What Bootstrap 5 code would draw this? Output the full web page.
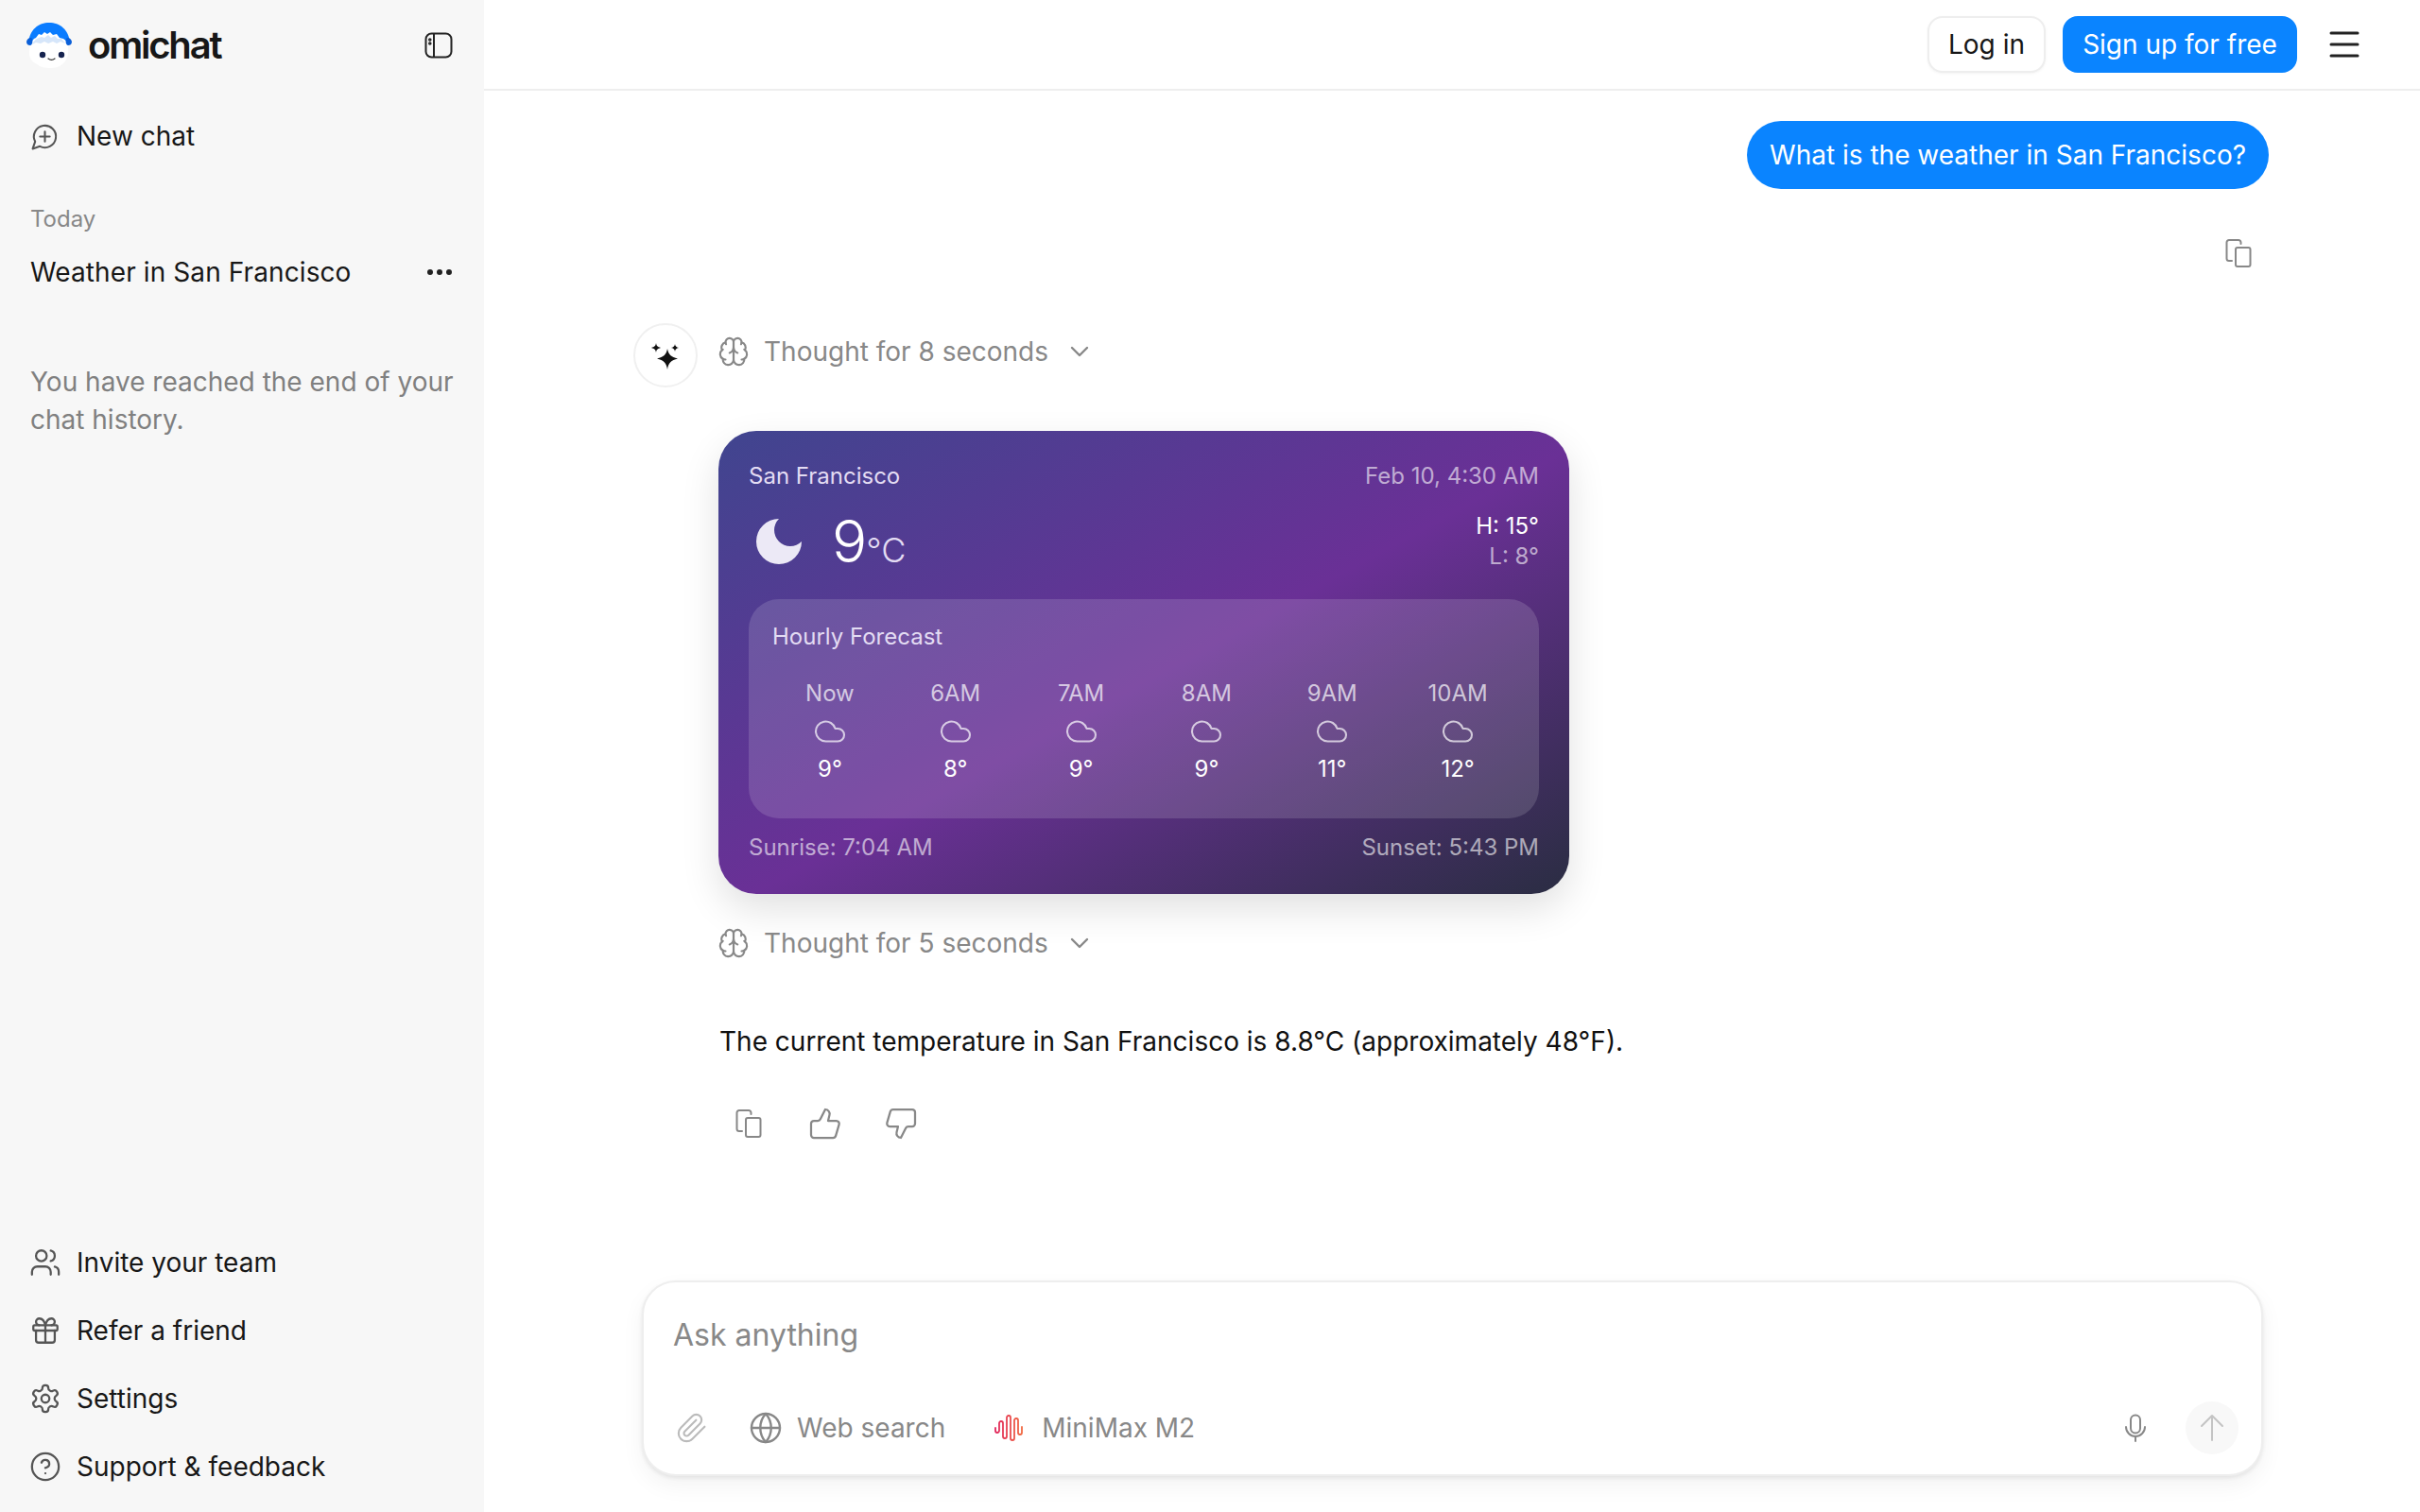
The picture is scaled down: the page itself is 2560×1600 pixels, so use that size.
<!DOCTYPE html>
<html lang="en">
<head>
  <meta charset="UTF-8" />
  <title>omichat</title>
  <link href="https://cdn.jsdelivr.net/npm/bootstrap@5.3.2/dist/css/bootstrap.min.css" rel="stylesheet" />
  <style>
    body {
      font-family: Inter, "Liberation Sans", sans-serif;
      font-size: 28px;
      color: #171717;
      background-color: #fff;
      overflow: hidden;
    }
    .app-shell { width: 2560px; height: 1600px; }
    svg { display: block; flex-shrink: 0; fill: none; stroke: currentColor; stroke-width: 2; stroke-linecap: round; stroke-linejoin: round; }

    /* sidebar */
    .side-panel { width: 512px; height: 1600px; background-color: #f7f7f7; padding: 0 33px 0 32px; }
    .brand-row { height: 96px; margin-left: -4px; }
    .brand-name { font-size: 40px; font-weight: 600; letter-spacing: -2.2px; color: #171717; margin-left: 17px; }
    .new-chat { height: 48px; margin-top: 24px; gap: 18px; }
    .new-chat svg { color: #555; stroke-width: 1.6; }
    .day-label { font-size: 24px; color: #888; margin-top: 48px; line-height: 32px; }
    .history-row { height: 40px; margin-top: 20px; letter-spacing: .1px; }
    .end-note { color: #808080; line-height: 40px; margin-top: 76px; margin-right: -6px; }
    .foot-list { padding-bottom: 12px; }
    .foot-link { height: 72px; gap: 16px; margin-left: -1px; }
    .foot-link svg { color: #555; stroke-width: 1.6; }

    /* header */
    .top-bar { height: 96px; border-bottom: 2px solid #eee; padding-right: 64px; }
    .login-btn, .signup-btn { font-size: 28px; height: 60px; border-radius: 16px; padding: 0; display: flex; align-items: center; justify-content: center; white-space: nowrap; }
    .login-btn { width: 125px; border: 2px solid #eee; color: #171717; box-shadow: 0 1px 3px rgba(0,0,0,.05); background: #fff; }
    .signup-btn { width: 248px; margin-left: 18px; border: 0; background-color: #0a84ff; color: #fff; }
    .menu-lines { margin-left: 34px; color: #222; stroke-width: 3; }

    /* thread */
    .thread-col { width: 1730px; margin: 0 auto; }
    .user-bubble { background-color: #0a84ff; color: #fff; height: 72px; border-radius: 36px; padding: 0 24px; display: flex; align-items: center; margin: 32px 1px 0 0; }
    .bubble-copy { color: #888; margin: 53px 19px 0 0; }
    .answer-group { margin-top: 59px; }
    .spark-dot { width: 68px; height: 68px; margin: 0 23px 0 -1px; border: 2px solid #f0f0f0; border-radius: 50%; }
    .thought-row { color: #888; height: 30px; gap: 15px; margin-left: -2px; }
    .thought-row svg { stroke-width: 1.5; }
    .thought-row .chev-ic { stroke-width: 2.4; }
    .weather-box { width: 900px; height: 490px; border-radius: 40px; padding: 30px 32px 0; color: #fff; font-size: 24px; margin: 69px 0 0 -1px;
      background: linear-gradient(to bottom right, #40458f 0%, #6a3096 52%, #2a2d42 100%);
      box-shadow: 0 16px 40px rgba(0,0,0,.12); }
    .soft-text { color: rgba(255,255,255,.6); }
    .lav-text { color: #e3dcf3; }
    .now-row { height: 64px; margin-top: 19px; line-height: 32px; }
    .big-temp { font-size: 62px; font-weight: 300; line-height: 62px; margin-left: 24px; }
    .temp-unit { font-size: 36px; font-weight: 300; color: #e3dcf3; line-height: 36px; margin-left: -1px; }
    .forecast-panel { height: 232px; background-color: rgba(255,255,255,.14); border-radius: 32px; padding: 22px 25px 0; margin-top: 29px; }
    .hour-grid { display: grid; grid-template-columns: repeat(6, 1fr); gap: 11px; margin-top: 26px; text-align: center; line-height: 32px; }
    .hour-grid .hour-label { color: rgba(255,255,255,.7); }
    .hour-grid svg { margin: 6px auto 6px; color: rgba(255,255,255,.7); stroke-width: 1.4; }
    .sun-row { margin-top: 13px; }
    .answer-text { color: #111; margin-top: 69px; line-height: 40px; }
    .action-row { color: #888; margin-top: 49px; padding-left: 17px; }
    .action-row .thumb-ic { stroke-width: 1.5; }

    /* composer */
    .composer-box { width: 1715px; height: 207px; border: 2px solid #eee; border-radius: 36px; box-shadow: 0 2px 4px rgba(0,0,0,.08), 0 10px 24px rgba(0,0,0,.05); background: #fff; padding: 0 24px 0 31px; position: absolute; bottom: 38px; left: 679px; }
    .ask-text { color: #888; font-size: 32px; margin-top: 36px; line-height: 40px; }
    .tool-row { color: #888; margin-top: 50px; height: 56px; }
    .send-dot { width: 56px; height: 56px; border-radius: 50%; background-color: #f8f8f8; color: #c4c4c4; margin-left: 41px; }
  </style>
</head>
<body>
  <svg width="0" height="0" class="position-absolute">
    <symbol id="ic-copy" viewBox="0 0 28 30"><rect x="11" y="9" width="15.5" height="20" rx="2"/><path d="M7 23H4a2.5 2.5 0 0 1-2.5-2.5V3.500A2.500 2.500 0 0 1 4 1h10a2.500 2.500 0 0 1 2.500 2.500V5"/></symbol>
    <symbol id="ic-brain" viewBox="0 0 24 24"><path d="M12 5a3 3 0 1 0-5.997.125 4 4 0 0 0-2.526 5.77 4 4 0 0 0 .556 6.588A4 4 0 1 0 12 18Z"/><path d="M12 5a3 3 0 1 1 5.997.125 4 4 0 0 1 2.526 5.77 4 4 0 0 1-.556 6.588A4 4 0 1 1 12 18Z"/><path d="M15 13a4.500 4.500 0 0 1-3-4 4.500 4.500 0 0 1-3 4"/><path d="M17.599 6.500a3 3 0 0 0 .399-1.375"/><path d="M6.003 5.125A3 3 0 0 0 6.401 6.500"/><path d="M3.477 10.896a4 4 0 0 1 .585-.396"/><path d="M19.938 10.500a4 4 0 0 1 .585.396"/><path d="M6 18a4 4 0 0 1-1.967-.516"/><path d="M19.967 17.484A4 4 0 0 1 18 18"/></symbol>
    <symbol id="ic-chev" viewBox="0 0 20 12"><path d="M2 2l8 8 8-8"/></symbol>
    <symbol id="ic-cloud" viewBox="0 0 24 24"><path d="M17.500 19H9a7 7 0 1 1 6.710-9h1.790a4.500 4.500 0 1 1 0 9Z"/></symbol>
  </svg>

  <div class="app-shell d-flex position-relative">
    <!-- Sidebar -->
    <aside class="side-panel d-flex flex-column flex-shrink-0">
      <div class="brand-row d-flex align-items-center">
        <svg width="48" height="48" viewBox="0 0 48 48" style="stroke:none">
          <path fill="#0a7cff" d="M2 22C3 7 13 0 24 0s21 7 22 22z"/>
          <path fill="#fff" d="M4 24c1-4 3-7 6-8l3-4 3 1 3-3 3 2 3-2 3 3 4-1 3 4 4 1c3 2 5 4 5 7 1 9-1 16-6 20-4 3-8 4-13 4s-10-1-14-4C2 40 2 32 4 24z"/>
          <path fill="#d6e6fa" d="M6 23c2-4 4-6 7-7l3-1 3 1 4-3 3 3 4-2 3 3 4 0 4 5-5-2-4 2-4-2-5 2-4-2-4 2-5-1z"/>
          <path fill="#0a5fd8" d="M0 20c1-4 5-5 6-3 1 3 0 7-2 7s-4-1-4-4zM48 20c-1-4-5-5-6-3-1 3 0 7 2 7s4-1 4-4z"/>
          <circle cx="17" cy="34" r="3.200" fill="#16234f"/><circle cx="37" cy="34" r="3.200" fill="#16234f"/>
          <path d="M23 38c2 1.500 5 1.500 7 0" stroke="#333" stroke-width="1.200" fill="none"/>
        </svg>
        <span class="brand-name">omichat</span>
        <svg class="ms-auto" width="30" height="28" viewBox="0 0 30 28" style="color:#222"><rect x="1.500" y="1.500" width="27" height="25" rx="6"/><path d="M10 2v24"/><circle cx="5.800" cy="8" r=".8"/><circle cx="5.800" cy="12" r=".8"/></svg>
      </div>
      <div class="new-chat d-flex align-items-center">
        <svg width="31" height="31" viewBox="0 0 24 24"><path d="M7.900 20A9 9 0 1 0 4 16.100L2 22Z"/><path d="M8 12h8M12 8v8"/></svg>
        <span>New chat</span>
      </div>
      <div class="day-label">Today</div>
      <div class="history-row d-flex align-items-center justify-content-between">
        <span>Weather in San Francisco</span>
        <svg width="28" height="8" viewBox="0 0 28 8" style="stroke:none;fill:#222"><circle cx="4" cy="4" r="3"/><circle cx="14" cy="4" r="3"/><circle cx="24" cy="4" r="3"/></svg>
      </div>
      <div class="end-note">You have reached the end of your chat history.</div>
      <div class="foot-list mt-auto">
        <div class="foot-link d-flex align-items-center">
          <svg width="34" height="34" viewBox="0 0 24 24"><path d="M16 21v-2a4 4 0 0 0-4-4H6a4 4 0 0 0-4 4v2"/><circle cx="9" cy="7" r="4"/><path d="M22 21v-2a4 4 0 0 0-3-3.870"/><path d="M16 3.130a4 4 0 0 1 0 7.750"/></svg>
          <span>Invite your team</span>
        </div>
        <div class="foot-link d-flex align-items-center">
          <svg width="34" height="34" viewBox="0 0 24 24"><rect x="3" y="8" width="18" height="4" rx="1"/><path d="M12 8v13"/><path d="M19 12v7a2 2 0 0 1-2 2H7a2 2 0 0 1-2-2v-7"/><path d="M7.500 8a2.500 2.500 0 0 1 0-5A4.800 8 0 0 1 12 8a4.800 8 0 0 1 4.500-5 2.500 2.500 0 0 1 0 5"/></svg>
          <span>Refer a friend</span>
        </div>
        <div class="foot-link d-flex align-items-center">
          <svg width="34" height="34" viewBox="0 0 24 24"><path d="M12.220 2h-.44a2 2 0 0 0-2 2v.180a2 2 0 0 1-1 1.730l-.43.250a2 2 0 0 1-2 0l-.150-.080a2 2 0 0 0-2.730.730l-.220.380a2 2 0 0 0 .730 2.730l.150.100a2 2 0 0 1 1 1.720v.510a2 2 0 0 1-1 1.740l-.150.090a2 2 0 0 0-.730 2.730l.220.380a2 2 0 0 0 2.730.730l.150-.080a2 2 0 0 1 2 0l.430.250a2 2 0 0 1 1 1.730V20a2 2 0 0 0 2 2h.440a2 2 0 0 0 2-2v-.180a2 2 0 0 1 1-1.730l.430-.250a2 2 0 0 1 2 0l.150.080a2 2 0 0 0 2.730-.730l.220-.390a2 2 0 0 0-.730-2.730l-.150-.080a2 2 0 0 1-1-1.740v-.500a2 2 0 0 1 1-1.740l.150-.090a2 2 0 0 0 .730-2.730l-.220-.380a2 2 0 0 0-2.730-.730l-.150.080a2 2 0 0 1-2 0l-.430-.250a2 2 0 0 1-1-1.730V4a2 2 0 0 0-2-2z"/><circle cx="12" cy="12" r="3"/></svg>
          <span>Settings</span>
        </div>
        <div class="foot-link d-flex align-items-center">
          <svg width="34" height="34" viewBox="0 0 24 24"><circle cx="12" cy="12" r="10"/><path d="M9.100 9a3 3 0 0 1 5.830 1c0 2-3 3-3 3"/><path d="M12 17h.010"/></svg>
          <span>Support &amp; feedback</span>
        </div>
      </div>
    </aside>

    <!-- Main -->
    <main class="flex-grow-1">
      <div class="top-bar d-flex align-items-center justify-content-end">
        <button class="btn login-btn">Log in</button>
        <button class="btn signup-btn">Sign up for free</button>
        <svg class="menu-lines" width="32" height="28" viewBox="0 0 32 28"><path d="M2 2h28M2 14h28M2 26h28"/></svg>
      </div>

      <div class="thread-col">
        <div class="d-flex justify-content-end">
          <div class="user-bubble">What is the weather in San Francisco?</div>
        </div>
        <div class="d-flex justify-content-end">
          <svg class="bubble-copy" width="28" height="30"><use href="#ic-copy"/></svg>
        </div>

        <div class="answer-group d-flex">
          <div class="spark-dot d-flex align-items-center justify-content-center flex-shrink-0">
            <svg width="30" height="30" viewBox="0 0 30 30" style="stroke:none;fill:#111"><path d="M17 8c1 6 4 9 11 10.500C21 20 18 23 17 30c-1-7-4-10-11-11.500C13 17 16 14 17 8z"/><path d="M5 2c.5 3 1.500 4 5 5-3.500 1-4.500 2-5 5-.5-3-1.500-4-5-5 3.500-1 4.500-2 5-5z"/><path d="M25 3c.3 2.200 1.200 3.400 4 4-2.800.6-3.700 1.800-4 4-.3-2.200-1.200-3.400-4-4 2.800-.6 3.700-1.800 4-4z"/></svg>
          </div>
          <div class="flex-grow-1">
            <div class="thought-row d-flex align-items-center" style="margin-top:15px">
              <svg width="34" height="34"><use href="#ic-brain"/></svg>
              <span>Thought for 8 seconds</span>
              <svg class="chev-ic ms-2" width="20" height="12"><use href="#ic-chev"/></svg>
            </div>

            <div class="weather-box">
              <div class="d-flex justify-content-between">
                <span class="lav-text">San Francisco</span>
                <span class="soft-text">Feb 10, 4:30 AM</span>
              </div>
              <div class="now-row d-flex justify-content-between">
                <div class="d-flex align-items-center">
                  <svg width="64" height="64" viewBox="0 0 24 24"><path fill="#ece9f6" stroke="none" d="M12 3a6 6 0 0 0 9 9 9 9 0 1 1-9-9Z"/></svg>
                  <div class="d-flex align-items-baseline">
                    <span class="big-temp">9</span>
                    <span class="temp-unit">°C</span>
                  </div>
                </div>
                <div class="text-end">
                  <div>H: 15°</div>
                  <div class="soft-text">L: 8°</div>
                </div>
              </div>
              <div class="forecast-panel">
                <div class="lav-text">Hourly Forecast</div>
                <div class="hour-grid" id="hours"></div>
              </div>
              <div class="sun-row d-flex justify-content-between soft-text">
                <span>Sunrise: 7:04 AM</span>
                <span>Sunset: 5:43 PM</span>
              </div>
            </div>

            <div class="thought-row d-flex align-items-center" style="margin-top:37px">
              <svg width="34" height="34"><use href="#ic-brain"/></svg>
              <span>Thought for 5 seconds</span>
              <svg class="chev-ic ms-2" width="20" height="12"><use href="#ic-chev"/></svg>
            </div>

            <div class="answer-text">The current temperature in San Francisco is 8.8°C (approximately 48°F).</div>

            <div class="action-row d-flex align-items-center">
              <svg width="28" height="30"><use href="#ic-copy"/></svg>
              <svg class="thumb-ic" style="margin-left:49px" width="36" height="36" viewBox="0 0 24 24"><path d="M15 5.880 14 10h5.830a2 2 0 0 1 1.920 2.560l-2.330 8A2 2 0 0 1 17.500 22H4a2 2 0 0 1-2-2v-8a2 2 0 0 1 2-2h2.760a2 2 0 0 0 1.790-1.110L12 2a3.130 3.130 0 0 1 3 3.880Z"/></svg>
              <svg class="thumb-ic" style="margin-left:44px" width="36" height="36" viewBox="0 0 24 24"><path d="M9 18.120 10 14H4.170a2 2 0 0 1-1.920-2.560l2.330-8A2 2 0 0 1 6.500 2H20a2 2 0 0 1 2 2v8a2 2 0 0 1-2 2h-2.760a2 2 0 0 0-1.790 1.110L12 22a3.130 3.130 0 0 1-3-3.880Z"/></svg>
            </div>
          </div>
        </div>
      </div>
    </main>

    <!-- Composer -->
    <div class="composer-box">
      <div class="ask-text">Ask anything</div>
      <div class="tool-row d-flex align-items-center">
        <svg style="margin-left:3px;color:#bbb;stroke-width:1.500" width="34" height="34" viewBox="0 0 24 24"><path d="m21.440 11.050-9.190 9.190a6 6 0 0 1-8.490-8.490l8.570-8.570A4 4 0 1 1 18 8.840l-8.590 8.570a2 2 0 0 1-2.830-2.830l8.490-8.480"/></svg>
        <svg style="margin-left:43px;stroke-width:1.600" width="36" height="36" viewBox="0 0 24 24"><circle cx="12" cy="12" r="10"/><path d="M2 12h20"/><path d="M12 2a15 15 0 0 1 0 20 15 15 0 0 1 0-20z"/></svg>
        <span style="margin-left:15px">Web search</span>
        <svg style="margin-left:52px" width="32" height="30" viewBox="0 0 32 30">
          <defs><linearGradient id="waveGrad" gradientUnits="userSpaceOnUse" x1="0" y1="0" x2="32" y2="0"><stop offset="0" stop-color="#e0245e"/><stop offset="1" stop-color="#f2703f"/></linearGradient></defs>
          <path stroke="url(#waveGrad)" stroke-width="1.800" d="M1 15v3a2 2 0 0 0 4 0V10a2 2 0 0 1 4 0v14a2 2 0 0 0 4 0V4a2 2 0 0 1 4 0v22a2 2 0 0 0 4 0V7a2 2 0 0 1 4 0v13a2 2 0 0 0 4 0v-6"/>
        </svg>
        <span style="margin-left:18px">MiniMax M2</span>
        <svg class="ms-auto" width="24" height="30" viewBox="0 0 24 30" style="color:#888"><rect x="7" y="1.500" width="10" height="19" rx="5"/><path d="M2 14a10 10 0 0 0 20 0"/><path d="M12 24v5"/></svg>
        <div class="send-dot d-flex align-items-center justify-content-center">
          <svg width="26" height="30" viewBox="0 0 26 30"><path d="M13 28V2M2 13 13 2l11 11"/></svg>
        </div>
      </div>
    </div>
  </div>

  <script src="https://cdn.jsdelivr.net/npm/bootstrap@5.3.2/dist/js/bootstrap.bundle.min.js"></script>
  <script>
    const hours = [["Now","9°"],["6AM","8°"],["7AM","9°"],["8AM","9°"],["9AM","11°"],["10AM","12°"]];
    document.getElementById("hours").innerHTML = hours.map(h => `
      <div>
        <div class="hour-label">${h[0]}</div>
        <svg width="36" height="36"><use href="#ic-cloud"/></svg>
        <div>${h[1]}</div>
      </div>`).join("");
  </script>
</body>
</html>
